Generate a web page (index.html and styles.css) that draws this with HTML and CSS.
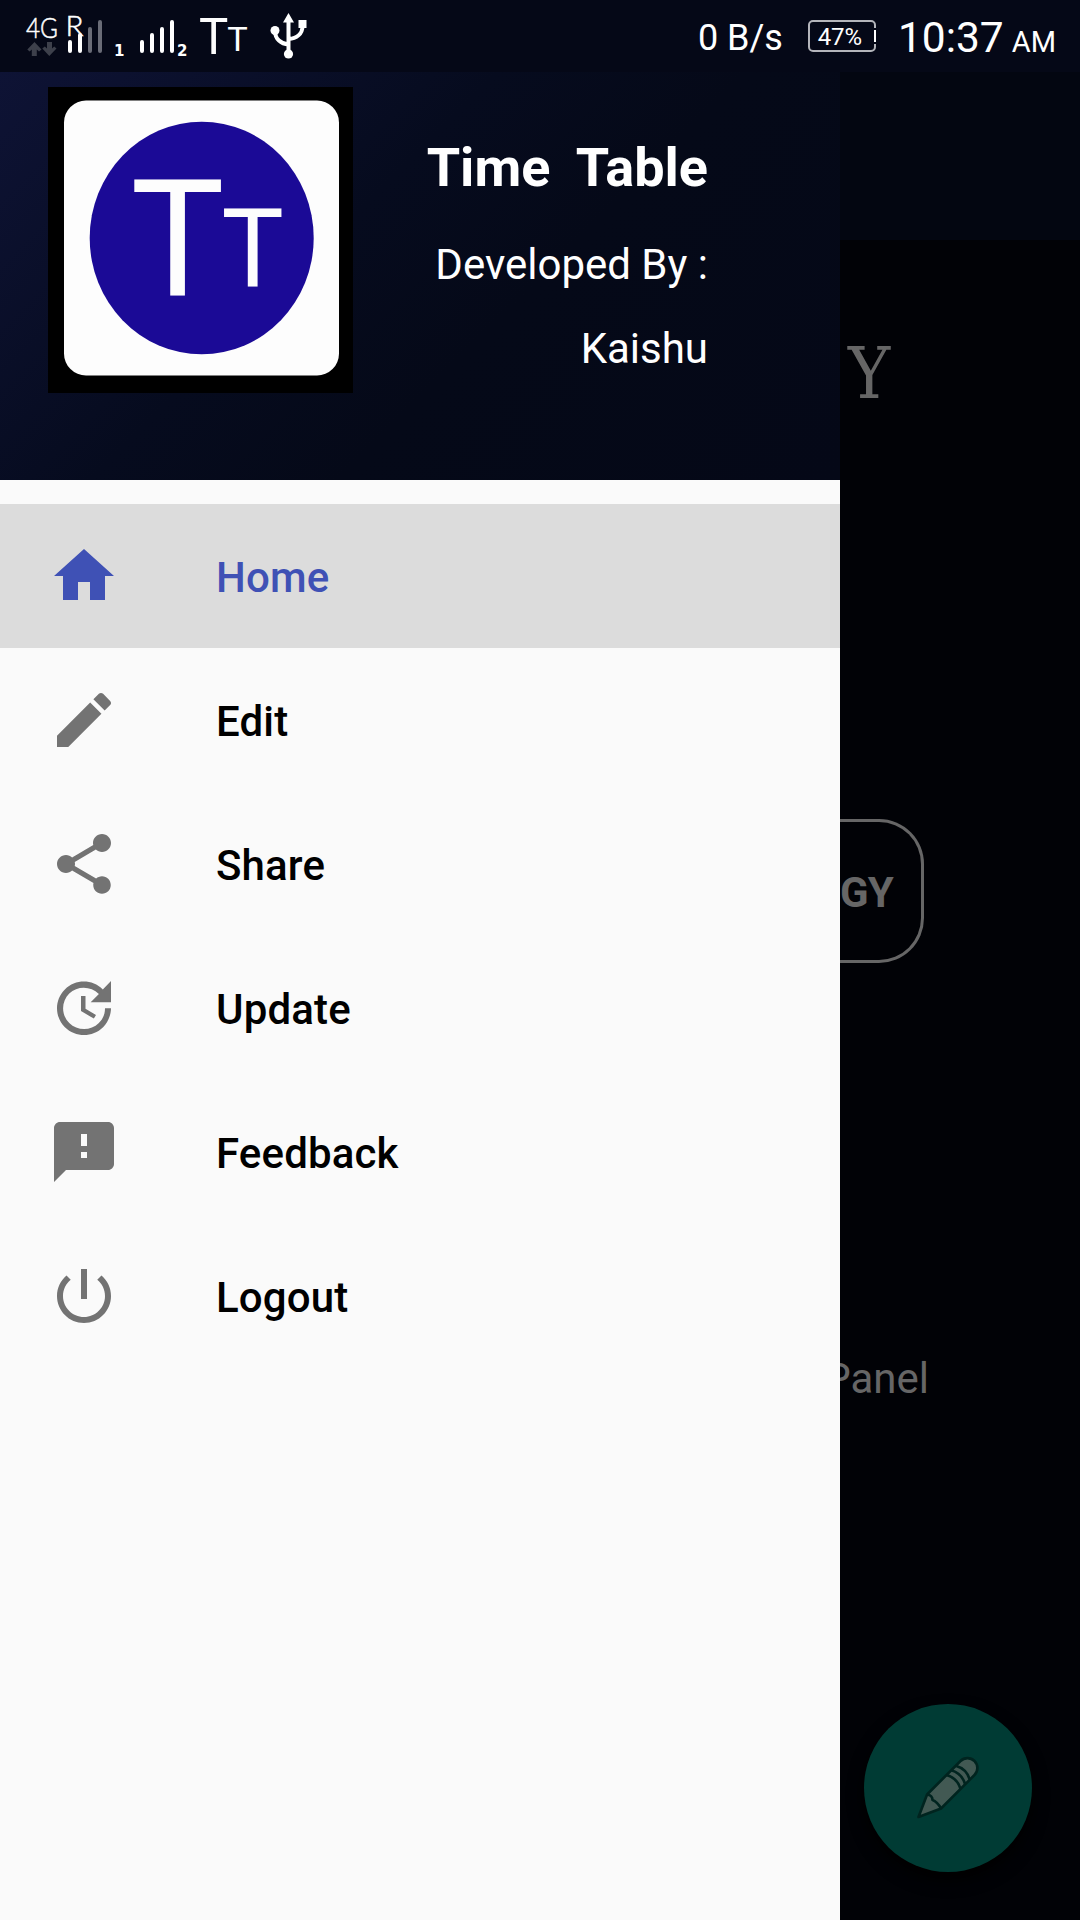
FILE: index.html
```html
<!DOCTYPE html>
<html lang="en">
<head>
<meta charset="utf-8">
<title>Time Table</title>
<link rel="stylesheet" href="styles.css">
</head>
<body>
<div class="screen">
  <header class="status">
    <svg class="status-icons" viewBox="0 0 330 72" width="330" height="72">
      <g class="thin">
        <text x="26" y="38" font-size="28" textLength="32" lengthAdjust="spacingAndGlyphs">4G</text>
        <text x="65.500" y="36" font-size="28" textLength="18" lengthAdjust="spacingAndGlyphs">R</text>
      </g>
      <path fill="#3d404b" d="M34.500 42l7 7.500-2.500 2-2.200-2V56h-5v-6.500l-2.200 2-2.300-2zM49.300 56l-7-7.500 2.500-2 2.200 2V42h5v6.500l2.200-2 2.300 2z"/>
      <g stroke-width="4" stroke-linecap="round">
        <path stroke="#fff" d="M70 42v9M80 35v16M142 42v9M152 35v16M162 29v22M172 22v29"/>
        <path stroke="#6a6c77" d="M90 29v22M100 22v29"/>
      </g>
      <g class="sim">
        <text x="114" y="55.500">1</text>
        <text x="177" y="55.500">2</text>
      </g>
      <g class="tee">
        <text x="198.900" y="54" font-size="50.500" textLength="29.300" lengthAdjust="spacingAndGlyphs">T</text>
        <text x="227.300" y="50.500" font-size="34" textLength="20.500" lengthAdjust="spacingAndGlyphs">T</text>
      </g>
      <g fill="none" stroke="#fff" stroke-width="4">
        <path d="M288.500 20v34M275 31c0 8 6 13 13.500 13.500M302.500 26c0 8-6 12.500-14 13"/>
      </g>
      <path fill="#fff" d="M288.500 13l5.500 9.500h-11zM298.500 20h8v8h-8z"/>
      <circle cx="275" cy="30.500" r="4.500" fill="#fff"/>
      <circle cx="288.500" cy="54" r="4.600" fill="#fff"/>
    </svg>
    <div class="status-right">
      <span class="speed">0 B/s</span>
      <span class="battery">47%</span>
      <span class="clock">10:37</span>
      <span class="meridiem">AM</span>
    </div>
  </header>

  <div class="body">
    <aside class="drawer">
      <div class="drawer-head">
        <div class="logo">
          <svg viewBox="0 0 305 306" width="305" height="306">
            <rect x="16" y="13.500" width="275" height="275" rx="22" fill="#fdfdfd"/>
            <ellipse cx="153.700" cy="151" rx="112" ry="116.300" fill="#1b0a96"/>
            <g class="tee">
              <text x="82.500" y="209" font-size="163" textLength="94" lengthAdjust="spacingAndGlyphs">T</text>
              <text x="173.500" y="199" font-size="109.500" textLength="62.300" lengthAdjust="spacingAndGlyphs">T</text>
            </g>
          </svg>
        </div>
        <div class="about">
          <h1>Time&nbsp; Table</h1>
          <p>Developed By :</p>
          <p>Kaishu</p>
        </div>
      </div>
      <nav class="menu">
        <a class="item active">
          <svg viewBox="0 0 24 24"><path d="M10 20v-6h4v6h5v-8h3L12 3 2 12h3v8z"/></svg>
          <span>Home</span>
        </a>
        <a class="item">
          <svg viewBox="0 0 24 24"><path d="M3 17.250V21h3.750L17.810 9.940l-3.750-3.750L3 17.250zM20.710 7.040c.39-.39.39-1.020 0-1.410l-2.340-2.340c-.39-.39-1.020-.39-1.410 0l-1.830 1.830 3.750 3.750 1.830-1.830z"/></svg>
          <span>Edit</span>
        </a>
        <a class="item">
          <svg viewBox="0 0 24 24"><path d="M18 16.080c-.76 0-1.440.3-1.960.77L8.910 12.700c.05-.23.09-.46.09-.7s-.04-.47-.09-.7l7.050-4.110c.54.5 1.250.81 2.040.81 1.660 0 3-1.340 3-3s-1.340-3-3-3-3 1.340-3 3c0 .24.04.47.09.7L8.040 9.810C7.500 9.310 6.790 9 6 9c-1.660 0-3 1.340-3 3s1.340 3 3 3c.79 0 1.500-.31 2.040-.81l7.120 4.160c-.05.21-.08.43-.08.65 0 1.610 1.310 2.920 2.920 2.920s2.920-1.310 2.920-2.920-1.310-2.920-2.920-2.920z"/></svg>
          <span>Share</span>
        </a>
        <a class="item">
          <svg viewBox="0 0 24 24"><path d="M21 10.120h-6.780l2.740-2.820c-2.730-2.700-7.150-2.800-9.880-.1-2.730 2.710-2.730 7.080 0 9.790s7.150 2.710 9.880 0C18.320 15.650 19 14.080 19 12.100h2c0 1.980-.88 4.550-2.640 6.290-3.510 3.480-9.210 3.480-12.720 0-3.500-3.470-3.530-9.110-.02-12.580s9.140-3.470 12.650 0L21 3v7.120zM12.500 8v4.250l3.500 2.080-.72 1.210L11 13V8h1.500z"/></svg>
          <span>Update</span>
        </a>
        <a class="item">
          <svg viewBox="0 0 24 24"><path d="M20 2H4c-1.100 0-2 .9-2 2v18l4-4h14c1.100 0 2-.9 2-2V4c0-1.100-.9-2-2-2zm-7 12h-2v-2h2v2zm0-4h-2V6h2v4z"/></svg>
          <span class="wide">Feedback</span>
        </a>
        <a class="item">
          <svg viewBox="0 0 24 24"><path d="M13 3h-2v10h2V3zm4.830 2.170l-1.420 1.420C17.990 7.860 19 9.810 19 12c0 3.870-3.130 7-7 7s-7-3.130-7-7c0-2.190 1.010-4.140 2.580-5.420L6.170 5.170C4.230 6.820 3 9.260 3 12c0 4.970 4.030 9 9 9s9-4.030 9-9c0-2.740-1.230-5.180-3.170-6.830z"/></svg>
          <span>Logout</span>
        </a>
      </nav>
    </aside>

    <main class="page">
      <div class="appbar"></div>
      <div class="heading"><span>Y</span></div>
      <div class="subject">GY</div>
      <div class="panel"><span>Panel</span></div>
      <div class="fab">
        <svg viewBox="0 0 72 72" width="72" height="72">
          <g transform="translate(6.500 65) rotate(-45) scale(1.1)" fill="#425953" stroke="#00241f" stroke-width="2.400" stroke-linejoin="round">
            <path d="M0 0L20-9H63a9 9 0 0 1 9 9a9 9 0 0 1-9 9H20z"/>
            <path fill="none" d="M20-9q3 4 0 7q2 4 0 11M45-9q5 9 0 18M51-9q5 9 0 18M57-9q5 9 0 18"/>
          </g>
        </svg>
      </div>
    </main>
  </div>
</div>
</body>
</html>
```

FILE: styles.css
```css
* { box-sizing: border-box; margin: 0; padding: 0; }

body {
  width: 1080px;
  height: 1920px;
  overflow: hidden;
  background: #010206;
  font-family: Roboto, sans-serif;
}

.screen {
  display: flex;
  flex-direction: column;
  width: 1080px;
  height: 1920px;
}

.status {
  display: flex;
  justify-content: space-between;
  height: 72px;
  background: #050817;
  color: #fff;
}

.thin { font-family: Lato, sans-serif; font-weight: 300; fill: #fff; stroke: #fff; stroke-width: 0.5; }
.sim { font: 700 15px "DejaVu Sans", sans-serif; fill: #fff; }
.tee { font-family: Roboto, sans-serif; fill: #fdfdfd; }

.status-right {
  display: flex;
  align-items: flex-start;
  height: 72px;
  padding-right: 24px;
  white-space: nowrap;
}

.speed { font-size: 36px; line-height: 76px; margin-right: 25px; }

.battery {
  position: relative;
  width: 68px;
  height: 32px;
  margin: 20px 22px 0 0;
  padding-right: 4px;
  border: 2px solid #b4b5bb;
  border-radius: 5px;
  font-size: 24px;
  line-height: 30px;
  text-align: center;
}

.battery::after {
  content: "";
  position: absolute;
  right: -2px;
  top: 8px;
  width: 2px;
  height: 12px;
  background: #fff;
  outline: 2px solid #050817;
}

.clock { font-size: 42.5px; line-height: 75px; margin-right: 8px; }
.meridiem { font-size: 29px; line-height: 84px; }

.body { display: flex; flex: 1; }

.drawer { width: 840px; background: #fafafa; }

.drawer-head {
  display: flex;
  justify-content: space-between;
  height: 408px;
  padding: 15px 132px 0 48px;
  background: linear-gradient(135deg, #0e1335 0%, #060b1e 40%, #050918 60%, #050817 100%);
  color: #fff;
}

.logo { width: 305px; height: 306px; background: #000; }
.logo svg { display: block; }

.about { padding-top: 49px; text-align: right; }
.about h1 { font-size: 54px; line-height: 64px; font-weight: 700; }
.about p { font-size: 42px; line-height: 84px; }
.about h1 + p { margin-top: 23px; }

.menu { padding-top: 24px; }

.item {
  display: flex;
  align-items: center;
  height: 144px;
  padding-left: 48px;
  gap: 96px;
  color: #000;
  font-size: 42px;
  font-weight: 500;
}

.item span { padding-top: 2px; letter-spacing: 0.15px; }
.item svg { width: 72px; height: 72px; fill: #737373; }
.item.active { background: #dcdcdc; color: #3f51b5; }
.item.active svg { fill: #3f51b5; }

.page {
  display: flex;
  flex-direction: column;
  width: 240px;
  background: #010206;
  color: #666;
  overflow: hidden;
}

.appbar { height: 168px; background: #030611; }

.heading {
  height: 260px;
  padding: 89px 0 0 8px;
  font: 71px/90px "DejaVu Serif", serif;
}

.heading span {
  display: inline-block;
  transform: scaleX(0.9);
  transform-origin: left;
}

.subject {
  width: 84px;
  height: 144px;
  margin-top: 319px;
  border: 3px solid #666;
  border-left: 0;
  border-radius: 0 45px 45px 0;
  font-size: 42px;
  line-height: 142px;
  letter-spacing: -0.8px;
  font-weight: 700;
}

.panel {
  display: flex;
  justify-content: flex-end;
  width: 89px;
  height: 60px;
  margin-top: 386px;
  font-size: 42px;
  line-height: 60px;
}

.fab {
  display: grid;
  place-items: center;
  width: 168px;
  height: 168px;
  margin: 295px 0 0 24px;
  border-radius: 50%;
  background: #003b34;
  box-shadow: 0 8px 16px #000;
}
```
